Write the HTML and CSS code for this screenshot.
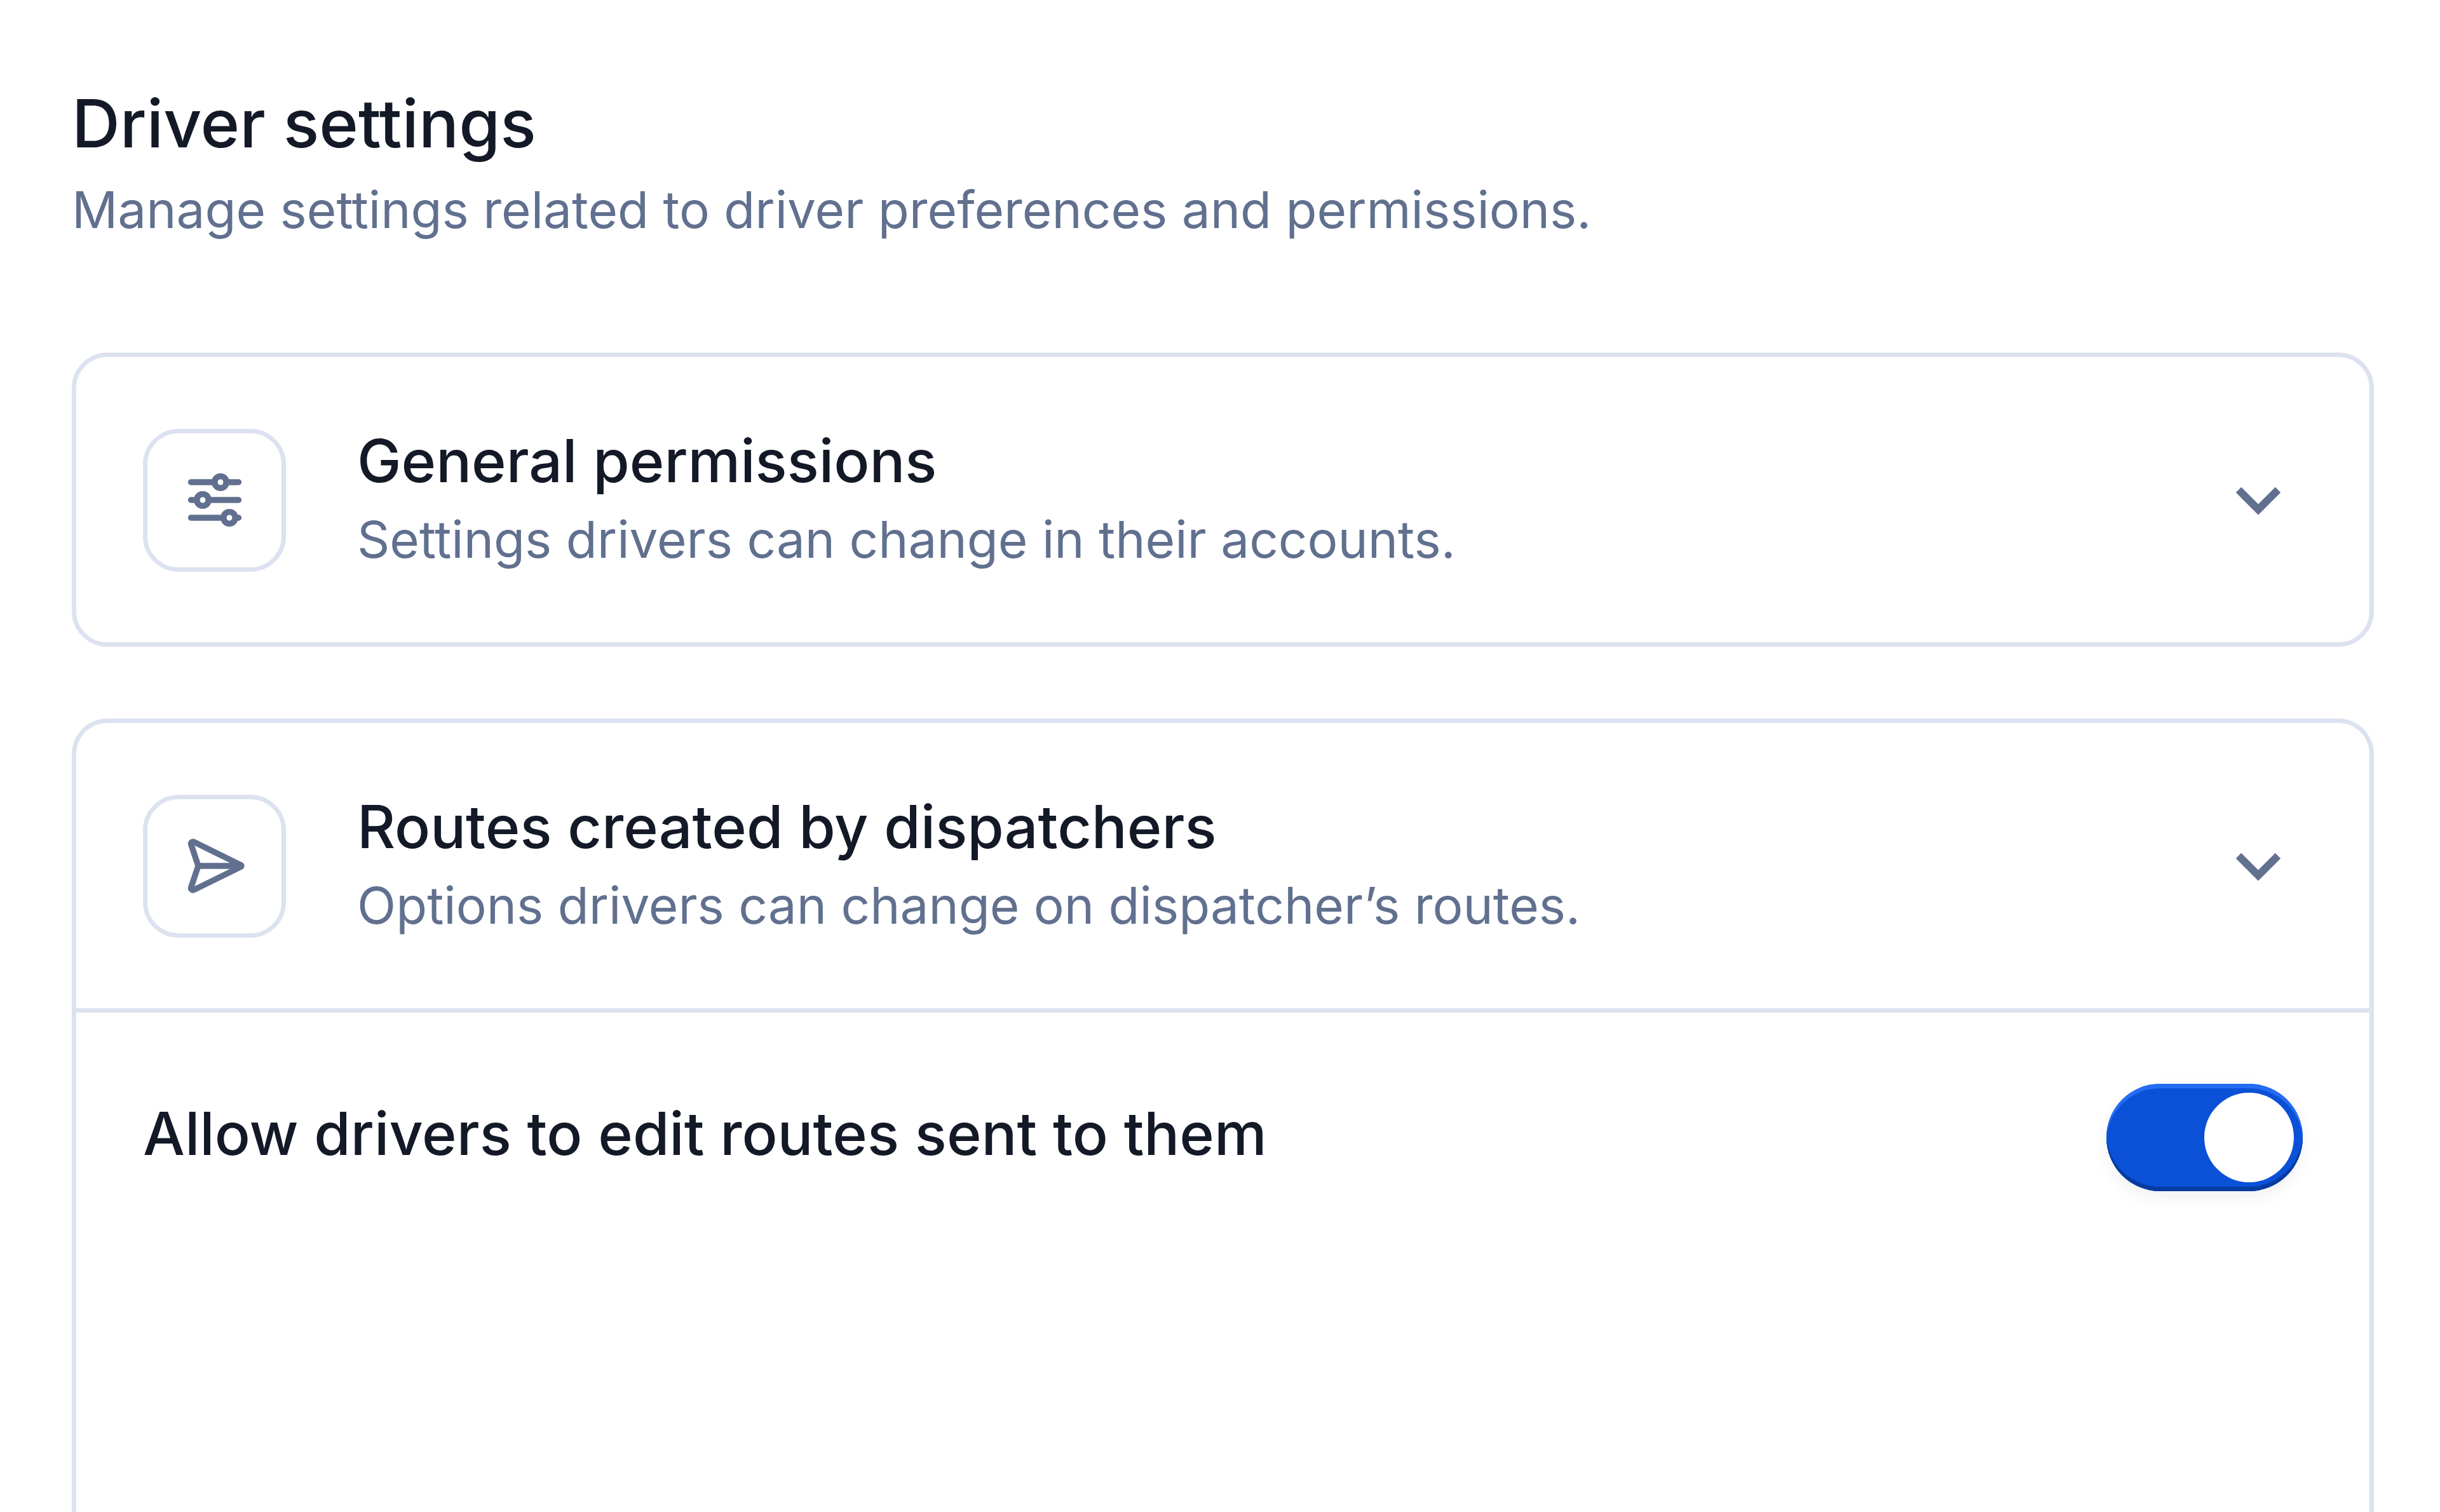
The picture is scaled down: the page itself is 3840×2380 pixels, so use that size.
FILE: index.html
```html
<!DOCTYPE html>
<html lang="en">
<head>
    <meta charset="UTF-8">
    <meta name="viewport" content="width=device-width, initial-scale=1.0">
    <title>Driver settings</title>
    <link rel="stylesheet" href="styles.css">
</head>
<body>
    <main class="page">
        <header class="page-header">
            <h1>Driver settings</h1>
            <p class="description">Manage settings related to driver preferences and permissions.</p>
        </header>

        <section class="card">
            <button class="card-header" type="button" aria-expanded="false">
                <span class="icon-box">
                    <svg class="icon" viewBox="0 0 140 140" aria-hidden="true">
                        <path d="M32.5 42H70M88 42H107.5M32.5 70H42M60 70H107.5M32.5 98H84M102 98H107.5"/>
                        <circle cx="79" cy="42" r="9.3"/>
                        <circle cx="51" cy="70" r="9.3"/>
                        <circle cx="93" cy="98" r="9.3"/>
                    </svg>
                </span>
                <span class="card-text">
                    <span class="card-title">General permissions</span>
                    <span class="description">Settings drivers can change in their accounts.</span>
                </span>
                <svg class="chevron" viewBox="0 0 140 140" aria-hidden="true">
                    <path d="M39 54L70 85L101 54"/>
                </svg>
            </button>
        </section>

        <section class="card card-open">
            <button class="card-header" type="button" aria-expanded="true" aria-controls="routesPanel">
                <span class="icon-box">
                    <svg class="icon" viewBox="0 0 140 140" aria-hidden="true">
                        <path d="M44 70L32.8 36.6C31.6 33.4 34.6 31 37.4 32.4L110.5 68.4C112.4 69.2 112.4 70.8 110.5 71.6L37.4 107.6C34.6 109 31.6 106.6 32.8 103.4ZM44 70H108"/>
                    </svg>
                </span>
                <span class="card-text">
                    <span class="card-title">Routes created by dispatchers</span>
                    <span class="description">Options drivers can change on dispatcher’s routes.</span>
                </span>
                <svg class="chevron" viewBox="0 0 140 140" aria-hidden="true">
                    <path d="M39 54L70 85L101 54"/>
                </svg>
            </button>
            <div class="card-panel" id="routesPanel">
                <div class="setting">
                    <label class="setting-label" for="editRoutes">Allow drivers to edit routes sent to them</label>
                    <input class="toggle" type="checkbox" role="switch" id="editRoutes" checked>
                </div>
            </div>
        </section>
    </main>
</body>
</html>
```
FILE: styles.css
```css
* {
    margin: 0;
    padding: 0;
    box-sizing: border-box;
}

body {
    font-family: Inter, 'Liberation Sans', sans-serif;
    background: #fff;
    color: #131926;
}

.page {
    display: flex;
    flex-direction: column;
    min-height: 100vh;
    padding: 120px 104px 0 113px;
}

.page-header {
    margin-bottom: 163px;
}

h1 {
    font-size: 105px;
    font-weight: 500;
    line-height: 148px;
}

.description {
    font-size: 80px;
    font-weight: 400;
    line-height: 124px;
    color: #61708f;
}

.card {
    border: 7px solid #dce2ef;
    border-radius: 56px;
    margin-bottom: 113px;
}

/* the open card runs on to the bottom of the page */
.card-open {
    flex: 1;
    margin-bottom: 0;
    border-bottom: 0;
    border-radius: 56px 56px 0 0;
}

.card-header {
    display: flex;
    align-items: center;
    gap: 112px;
    width: 100%;
    padding: 101px 105px 100px;
    border: 0;
    background: none;
    color: inherit;
    font-family: inherit;
    text-align: left;
    cursor: pointer;
}

.icon-box {
    display: flex;
    align-items: center;
    justify-content: center;
    flex-shrink: 0;
    width: 225px;
    height: 225px;
    border: 7px solid #dce2ef;
    border-radius: 56px;
}

.icon,
.chevron {
    flex-shrink: 0;
    width: 140px;
    height: 140px;
    fill: none;
    stroke: #61708f;
}

.icon {
    stroke-width: 9.4;
    stroke-linecap: round;
    stroke-linejoin: round;
}

.chevron {
    stroke-width: 12;
}

.card-text {
    display: flex;
    flex-direction: column;
    flex: 1;
}

.card-title,
.setting-label {
    font-size: 93px;
    font-weight: 500;
    line-height: 124px;
}

.card-panel {
    border-top: 7px solid #dce2ef;
    padding: 112px 105px;
}

.setting {
    display: flex;
    align-items: flex-start;
    justify-content: space-between;
}

.setting-label {
    line-height: 156px;
}

.toggle {
    appearance: none;
    display: flex;
    justify-content: flex-end;
    flex-shrink: 0;
    width: 309px;
    height: 169px;
    padding: 14px;
    border-radius: 85px;
    background: #0b51d8;
    box-shadow: inset 0 7px #256cf4, inset 0 -7px #063c9f, 0 10px 28px rgba(0, 0, 0, 0.06);
    cursor: pointer;
}

.toggle::before {
    content: '';
    width: 141px;
    height: 141px;
    border-radius: 50%;
    background: #fff;
}

.toggle:not(:checked) {
    justify-content: flex-start;
    background: #61708f;
    box-shadow: none;
}
```
